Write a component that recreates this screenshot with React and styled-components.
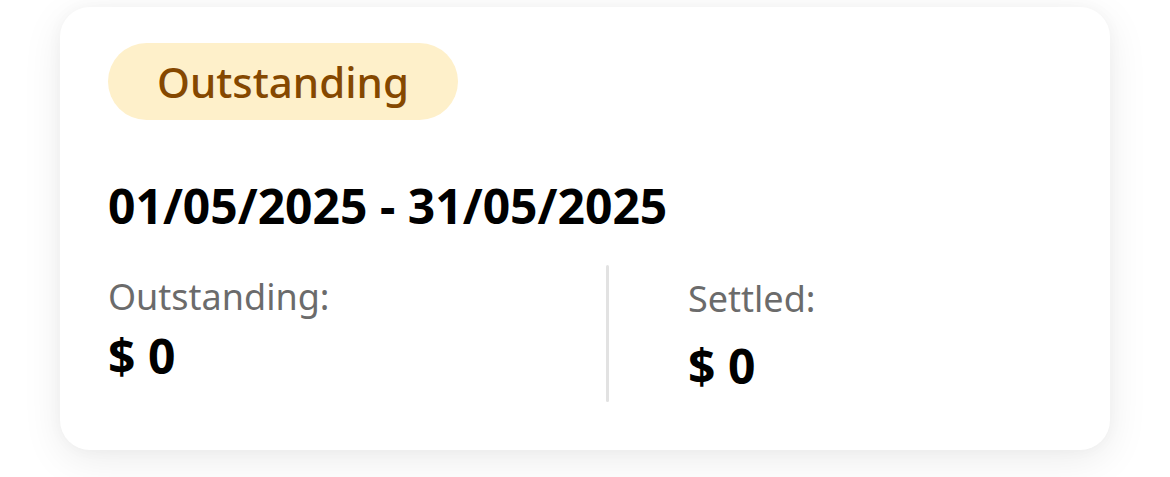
import React from "react";
import styled, { createGlobalStyle } from "styled-components";

const GlobalStyle = createGlobalStyle`
  * { box-sizing: border-box; }
  body {
    margin: 0;
    background: #ffffff;
    font-family: "Noto Sans", "Open Sans", sans-serif;
  }
`;

const Page = styled.main`
  padding: 7px 60px 0 60px;
  height: 477px;
  overflow: hidden;
`;

const Card = styled.section`
  width: 1050px;
  background: #ffffff;
  border-radius: 30px;
  padding: 36px 48px 48px 48px;
  box-shadow: 0 10px 40px rgba(0, 0, 0, 0.08), 0 0 16px rgba(0, 0, 0, 0.03);
`;

const Badge = styled.span`
  display: inline-flex;
  align-items: center;
  height: 77px;
  padding: 0 49px;
  border-radius: 39px;
  background: #fef0ca;
  color: #854800;
  font-size: 42px;
  font-weight: 500;
  line-height: 1;
`;

const Period = styled.h2`
  margin: 53px 0 27px 0;
  font-size: 48px;
  font-weight: 700;
  line-height: 65px;
  color: #000000;
`;

const Summary = styled.div`
  display: flex;
  height: 137px;
`;

const Column = styled.div`
  display: flex;
  flex-direction: column;
  width: ${(p) => p.$width};
  padding-top: ${(p) => p.$top}px;
  padding-left: ${(p) => p.$left}px;
  gap: ${(p) => p.$gap}px;
`;

const Divider = styled.div`
  width: 3px;
  background: #e2e2e2;
  border-radius: 2px;
`;

const Label = styled.span`
  font-size: 36px;
  line-height: 49px;
  color: #6b6b6b;
`;

const Amount = styled.span`
  font-size: 48px;
  font-weight: 700;
  line-height: 65px;
  color: #000000;
`;

const totals = [
  { label: "Outstanding:", value: "$ 0", width: "498px", top: 7, left: 0, gap: 2 },
  { label: "Settled:", value: "$ 0", width: "auto", top: 9, left: 79, gap: 10 },
];

export default function App() {
  return (
    <>
      <GlobalStyle />
      <Page>
        <Card>
          <Badge>Outstanding</Badge>
          <Period>01/05/2025 - 31/05/2025</Period>
          <Summary>
            {totals.map((t, i) => (
              <React.Fragment key={t.label}>
                {i > 0 && <Divider />}
                <Column $width={t.width} $top={t.top} $left={t.left} $gap={t.gap}>
                  <Label>{t.label}</Label>
                  <Amount>{t.value}</Amount>
                </Column>
              </React.Fragment>
            ))}
          </Summary>
        </Card>
      </Page>
    </>
  );
}
